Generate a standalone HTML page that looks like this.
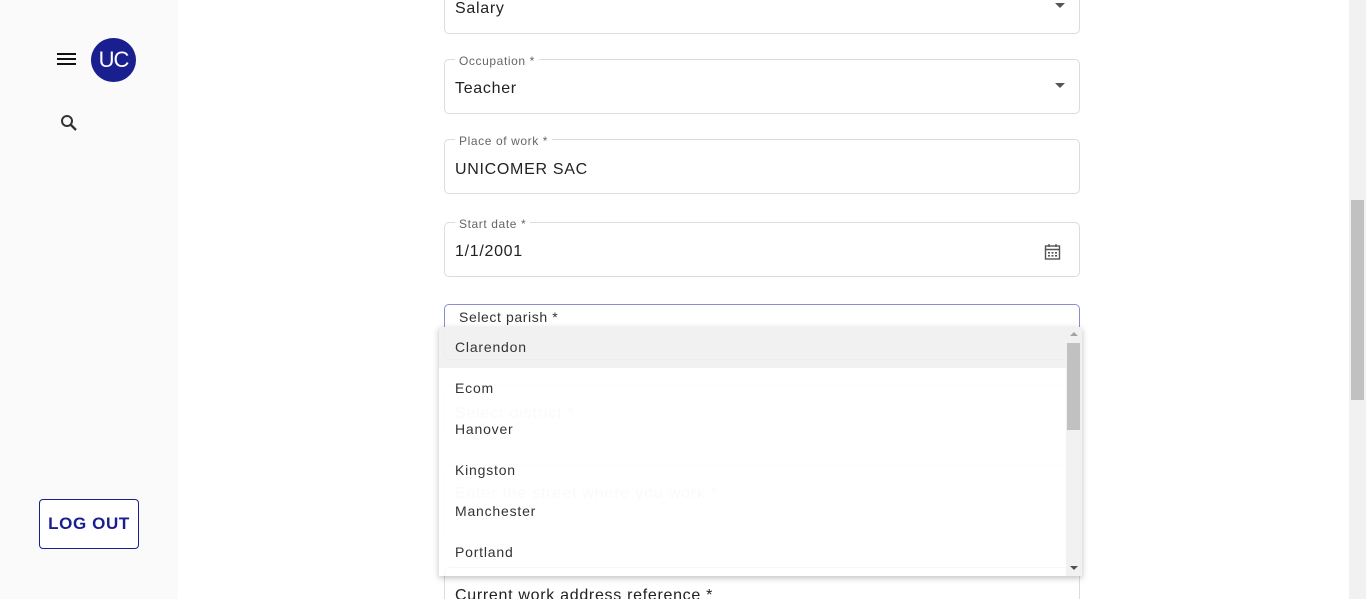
<!DOCTYPE html>
<html style="overflow:hidden;height:599px"><head><style>
*{box-sizing:border-box;margin:0;padding:0}
body{width:1366px;height:599px;overflow:hidden;background:#fff;font-family:"Liberation Sans",sans-serif;position:relative;color:#222}
.side{position:absolute;left:0;top:0;width:178px;height:599px;background:#fafafa}
.f{position:absolute;left:444px;width:636px;border:1px solid #dcdcdc;border-radius:5px;background:#fff}
.lab{position:absolute;left:10px;top:-5px;background:#fff;padding:0 4px;font-size:12px;color:#666;letter-spacing:.6px;line-height:12px}
.val{position:absolute;left:10px;font-size:16px;color:#222;letter-spacing:.7px}
.arr{position:absolute;right:14px;width:0;height:0;border-left:5px solid transparent;border-right:5px solid transparent;border-top:5px solid #555}
.ph{position:absolute;left:455px;font-size:16px;color:#e4e4e4;letter-spacing:.8px}
.menu{position:absolute;left:439px;top:327px;width:643px;height:249px;background:rgba(255,255,255,.8);box-shadow:0 2px 6px rgba(0,0,0,.25);overflow:hidden}
.it{position:absolute;left:16px;font-size:14px;color:#333;letter-spacing:.8px}
</style></head><body>
<div class="side">
  <div style="position:absolute;left:57px;top:53px;width:19px;height:2px;background:#111;box-shadow:0 5px 0 #111,0 10px 0 #111"></div>
  <div style="position:absolute;left:91px;top:38px;width:45px;height:44px;border-radius:50%;background:#1a1f8f;color:#fff;font-size:22px;text-align:center;line-height:44px;letter-spacing:-1px">UC</div>
  <svg style="position:absolute;left:60px;top:114px" width="18" height="18" viewBox="0 0 18 18"><circle cx="7" cy="7" r="5" fill="none" stroke="#333" stroke-width="2"/><path d="M10.5 10.5L16 16" stroke="#333" stroke-width="2.4"/></svg>
  <div style="position:absolute;left:39px;top:499px;width:100px;height:50px;border:1px solid #1a1f8f;border-radius:4px;background:#fff;color:#1a1f8f;font-size:17px;font-weight:bold;text-align:center;line-height:48px;letter-spacing:.6px">LOG OUT</div>
</div>

<div class="f" style="top:-21px;height:55px"><div class="val" style="top:20px">Salary</div><div class="arr" style="top:23px"></div></div>
<div class="f" style="top:59px;height:55px"><div class="lab">Occupation *</div><div class="val" style="top:20px">Teacher</div><div class="arr" style="top:23px"></div></div>
<div class="f" style="top:139px;height:55px"><div class="lab">Place of work *</div><div class="val" style="top:21px">UNICOMER SAC</div></div>
<div class="f" style="top:222px;height:55px"><div class="lab">Start date *</div><div class="val" style="top:20px">1/1/2001</div>
<svg style="position:absolute;right:18px;top:20px" width="17" height="17" viewBox="0 0 17 17"><rect x="1.5" y="3" width="14" height="13" fill="none" stroke="#555" stroke-width="1.4"/><path d="M1.5 6.5h14M5 1v3M12 1v3" stroke="#555" stroke-width="1.4"/><g fill="#555"><rect x="4" y="9" width="2" height="1.6"/><rect x="7.5" y="9" width="2" height="1.6"/><rect x="11" y="9" width="2" height="1.6"/><rect x="4" y="12" width="2" height="1.6"/><rect x="7.5" y="12" width="2" height="1.6"/><rect x="11" y="12" width="2" height="1.6"/></g></svg></div>
<div class="f" style="top:304px;height:56px;border:1.5px solid #8a8dd0"><div class="lab" style="top:4px;font-size:14px;color:#333;line-height:16px">Select parish *</div></div>
<div class="f" style="top:384px;height:55px;border-color:#f3f3f3"></div>
<div class="ph" style="top:405px">Select district *</div>
<div class="f" style="top:464px;height:74px;border-color:#f3f3f3"></div>
<div class="ph" style="top:485px">Enter the street where you work *</div>
<div class="f" style="top:567px;height:60px"><div class="val" style="top:19px">Current work address reference *</div></div>

<div class="menu">
  <div style="position:absolute;left:0;top:0;width:627px;height:41px;background:rgba(238,238,238,.8)"></div>
  <div class="it" style="top:12px">Clarendon</div>
  <div class="it" style="top:53px">Ecom</div>
  <div class="it" style="top:94px">Hanover</div>
  <div class="it" style="top:135px">Kingston</div>
  <div class="it" style="top:176px">Manchester</div>
  <div class="it" style="top:217px">Portland</div>
  <div style="position:absolute;right:0;top:0;width:16px;height:249px;background:#f1f1f1"></div>
  <div style="position:absolute;right:2px;top:16px;width:13px;height:87px;background:#c1c1c1"></div>
  <div style="position:absolute;right:4px;top:5px;border-left:4px solid transparent;border-right:4px solid transparent;border-bottom:4px solid #a3a3a3"></div>
  <div style="position:absolute;right:4px;bottom:6px;border-left:4px solid transparent;border-right:4px solid transparent;border-top:4px solid #505050"></div>
</div>

<div style="position:absolute;left:1349px;top:0;width:17px;height:599px;background:#f1f1f1"></div>
<div style="position:absolute;left:1351px;top:200px;width:13px;height:200px;background:#c1c1c1"></div>
</body></html>
